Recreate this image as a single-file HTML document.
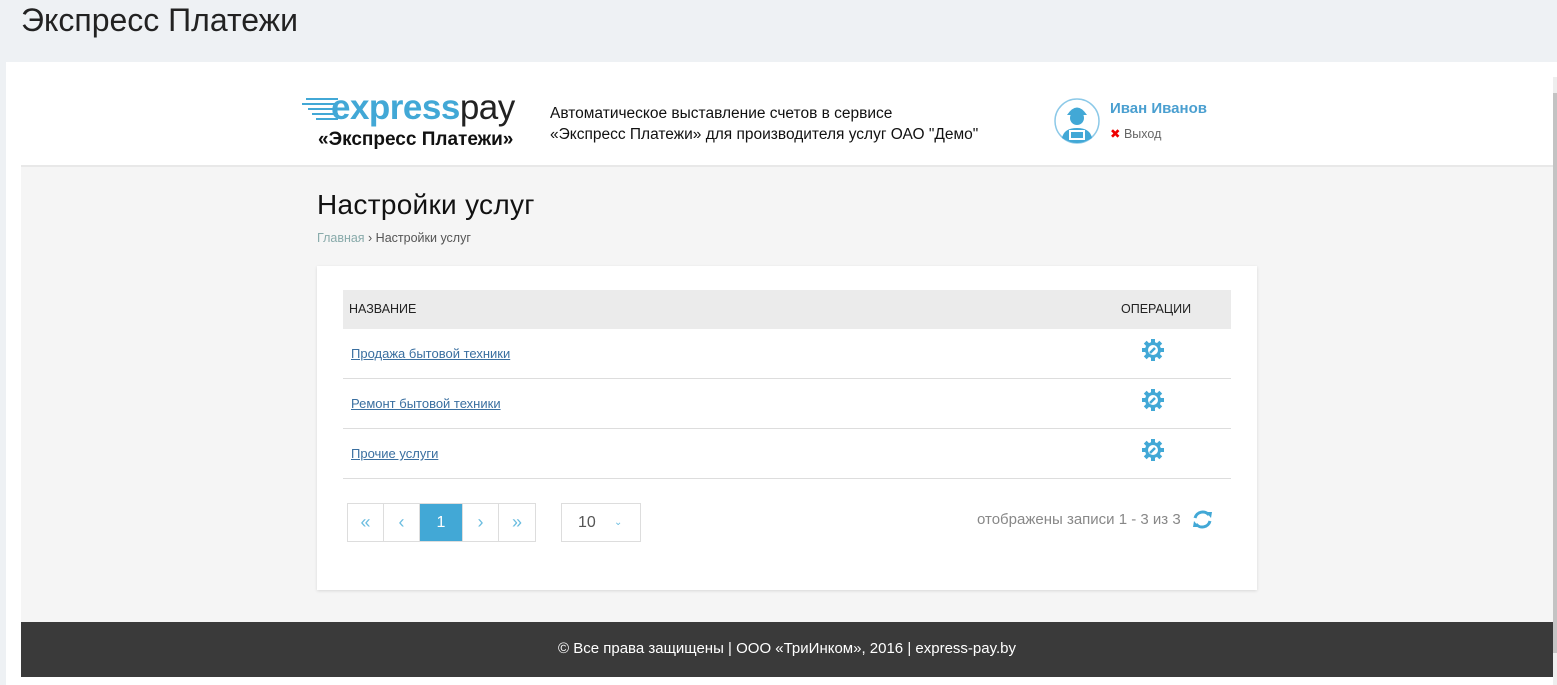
<!DOCTYPE html>
<html><head><meta charset="utf-8"><style>
*{margin:0;padding:0;box-sizing:border-box}
body{width:1557px;height:685px;background:#eef1f4;font-family:"Liberation Sans","DejaVu Sans",sans-serif;position:relative;overflow:hidden}
.abs{position:absolute}
h1.top{position:absolute;left:21px;top:1px;font-weight:normal;font-size:32px;color:#222;line-height:38px}
.panel{left:6px;top:62px;width:1551px;height:623px;background:#fff}
.gray{left:21px;top:165px;width:1532px;height:457px;background:#f5f5f5;border-top:2px solid #e8e8e8}
.footer{left:21px;top:622px;width:1532px;height:55px;background:#3a3a3a;color:#fff;font-size:15px;text-align:center;line-height:53px}
.card{left:317px;top:266px;width:940px;height:324px;background:#fff;box-shadow:0 1px 3px rgba(0,0,0,.12)}
.th{left:343px;top:290px;width:888px;height:39px;background:#ebebeb;font-size:12.5px;color:#222;line-height:39px}
.row{left:343px;width:888px;height:50px;border-bottom:1px solid #ddd}
.row a{position:absolute;left:8px;top:17px;font-size:13px;color:#3a6fa0;text-decoration:underline}
.gear{position:absolute;left:799px;top:10px}
.pg{left:347px;top:503px;height:39px;display:flex;border:1px solid #ddd}
.pg div{width:36px;height:37px;border-right:1px solid #ddd;color:#6bbde0;text-align:center;line-height:37px;font-size:18px}
.pg div.on{background:#42a8d6;color:#fff;width:43px;font-size:16px}
</style></head><body>
<h1 class="top">Экспресс Платежи</h1>
<div class="abs panel"></div>
<div class="abs" style="left:1553px;top:77px;width:4px;height:608px;background:#eee"></div>
<div class="abs" style="left:1553px;top:93px;width:4px;height:560px;background:#c3c3c3"></div>
<div class="abs gray"></div>
<svg class="abs" style="left:302px;top:96px" width="40" height="30"><g stroke="#42a8d6" stroke-width="2"><line x1="4" y1="3" x2="36" y2="3"/><line x1="0" y1="8" x2="36" y2="8"/><line x1="6" y1="13" x2="36" y2="13"/><line x1="10" y1="18" x2="36" y2="18"/><line x1="14" y1="23" x2="36" y2="23"/></g></svg>
<div class="abs" style="left:331px;top:86px;font-size:35px;letter-spacing:-0.5px;line-height:44px"><span style="color:#42a8d6;font-weight:bold">express</span><span style="color:#222">pay</span></div>
<div class="abs" style="left:318px;top:129px;font-size:19px;font-weight:bold;color:#111">«Экспресс Платежи»</div>
<div class="abs" style="left:550px;top:103px;font-size:15.5px;color:#111;line-height:21px">Автоматическое выставление счетов в сервисе<br>«Экспресс Платежи» для производителя услуг ОАО "Демо"</div>
<svg class="abs" style="left:1054px;top:98px" width="46" height="46"><circle cx="23" cy="23" r="22" fill="#fff" stroke="#8cc9e8" stroke-width="1.5"/><path d="M13 17 Q23 2 33 17 Z" fill="#42a8d6"/><circle cx="23" cy="20" r="7" fill="#42a8d6"/><path d="M8 40 Q10 30 23 30 Q36 30 38 40 Q30 45 23 45 Q16 45 8 40Z" fill="#42a8d6"/><rect x="15" y="32" width="16" height="10" fill="#fff"/><rect x="17" y="34" width="12" height="6" fill="#42a8d6"/></svg>
<div class="abs" style="left:1110px;top:100px;font-size:15px;font-weight:bold;color:#4a9fd0">Иван Иванов</div>
<div class="abs" style="left:1110px;top:126px;font-size:12.5px;color:#666"><span style="color:#e00;font-weight:bold">✖</span> Выход</div>
<div class="abs" style="left:317px;top:189px;font-size:28px;color:#111;letter-spacing:0.3px">Настройки услуг</div>
<div class="abs" style="left:317px;top:231px;font-size:12.5px;color:#555"><span style="color:#8aa">Главная</span> › Настройки услуг</div>
<div class="abs card"></div>
<div class="abs th"><span style="position:absolute;left:6px">НАЗВАНИЕ</span><span style="position:absolute;left:778px">ОПЕРАЦИИ</span></div>
<div class="abs row" style="top:329px"><a>Продажа бытовой техники</a><svg class="gear" width="22" height="22" viewBox="0 0 22 22"><g fill="#42a8d6"><circle cx="11" cy="11" r="8"/><rect x="9" y="0" width="4" height="22"/><rect x="0" y="9" width="22" height="4"/><rect x="9" y="0" width="4" height="22" transform="rotate(45 11 11)"/><rect x="9" y="0" width="4" height="22" transform="rotate(-45 11 11)"/></g><circle cx="11" cy="11" r="5" fill="#fff"/><path d="M8 14 L13 9" stroke="#42a8d6" stroke-width="2.5"/></svg></div>
<div class="abs row" style="top:379px"><a>Ремонт бытовой техники</a><svg class="gear" width="22" height="22" viewBox="0 0 22 22"><g fill="#42a8d6"><circle cx="11" cy="11" r="8"/><rect x="9" y="0" width="4" height="22"/><rect x="0" y="9" width="22" height="4"/><rect x="9" y="0" width="4" height="22" transform="rotate(45 11 11)"/><rect x="9" y="0" width="4" height="22" transform="rotate(-45 11 11)"/></g><circle cx="11" cy="11" r="5" fill="#fff"/><path d="M8 14 L13 9" stroke="#42a8d6" stroke-width="2.5"/></svg></div>
<div class="abs row" style="top:429px"><a>Прочие услуги</a><svg class="gear" width="22" height="22" viewBox="0 0 22 22"><g fill="#42a8d6"><circle cx="11" cy="11" r="8"/><rect x="9" y="0" width="4" height="22"/><rect x="0" y="9" width="22" height="4"/><rect x="9" y="0" width="4" height="22" transform="rotate(45 11 11)"/><rect x="9" y="0" width="4" height="22" transform="rotate(-45 11 11)"/></g><circle cx="11" cy="11" r="5" fill="#fff"/><path d="M8 14 L13 9" stroke="#42a8d6" stroke-width="2.5"/></svg></div>
<div class="abs pg"><div>«</div><div>‹</div><div class="on">1</div><div>›</div><div style="border-right:none">»</div></div>
<div class="abs" style="left:561px;top:503px;width:80px;height:39px;border:1px solid #ddd;font-size:16px;color:#555;line-height:37px;padding-left:16px">10 <span style="position:absolute;left:52px;font-size:10px;color:#6bbde0">⌄</span></div>
<div class="abs" style="left:977px;top:511px;font-size:15px;color:#888">отображены записи 1 - 3 из 3</div>
<svg class="abs" style="left:1192px;top:509px" width="21" height="21" viewBox="0 0 21 21"><g fill="none" stroke="#42a8d6" stroke-width="3"><path d="M3 9 A8 8 0 0 1 17 6"/><path d="M18 12 A8 8 0 0 1 4 15"/></g><path d="M14 3 L20 3 L19 9Z" fill="#42a8d6"/><path d="M7 18 L1 18 L2 12Z" fill="#42a8d6"/></svg>
<div class="abs footer">© Все права защищены | ООО «ТриИнком», 2016 | express-pay.by</div>
</body></html>
